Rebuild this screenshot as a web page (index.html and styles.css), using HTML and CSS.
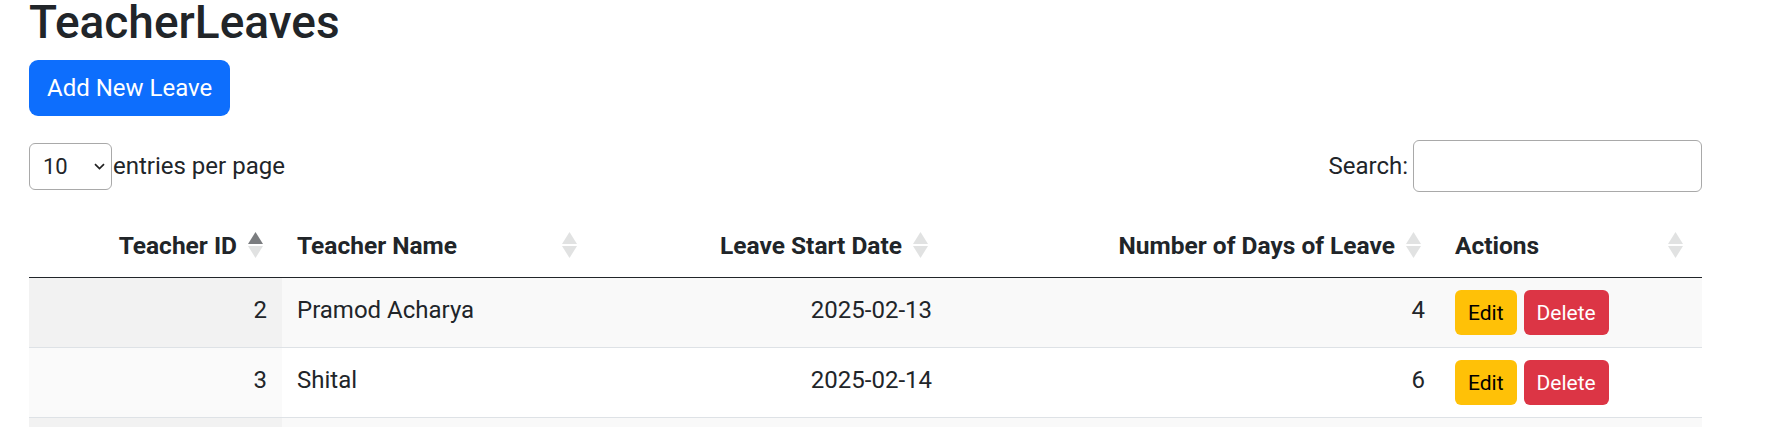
FILE: index.html
```html
<!DOCTYPE html>
<html lang="en">
<head>
<meta charset="utf-8">
<title>TeacherLeaves</title>
<link rel="stylesheet" href="styles.css">
</head>
<body>
<div class="page">
  <h2 class="title">TeacherLeaves</h2>
  <div class="actions-bar">
    <a class="btn btn-add" href="#">Add New Leave</a>
  </div>

  <div class="controls">
    <div class="length">
      <div class="select-wrap">
        <select class="select">
          <option>10</option>
          <option>25</option>
          <option>50</option>
          <option>100</option>
        </select>
        <svg class="chev" width="11" height="7" viewBox="0 0 11 7"><path d="M1 1.2l4.5 4.3L10 1.2" fill="none" stroke="#222" stroke-width="1.7"/></svg>
      </div>
      <label class="length-label">entries per page</label>
    </div>
    <div class="search">
      <label class="search-label">Search:</label>
      <input class="search-input" type="search">
    </div>
  </div>

  <table class="table">
    <colgroup>
      <col class="c1"><col class="c2"><col class="c3"><col class="c4"><col class="c5">
    </colgroup>
    <thead>
      <tr>
        <th class="num">Teacher ID<span class="order"><svg width="15" height="26" viewBox="0 0 15 26"><path class="up active" d="M7.5 0L15 12H0z"/><path class="down" d="M0 14h15L7.5 26z"/></svg></span></th>
        <th>Teacher Name<span class="order"><svg width="15" height="26" viewBox="0 0 15 26"><path class="up" d="M7.5 0L15 12H0z"/><path class="down" d="M0 14h15L7.5 26z"/></svg></span></th>
        <th class="num">Leave Start Date<span class="order"><svg width="15" height="26" viewBox="0 0 15 26"><path class="up" d="M7.5 0L15 12H0z"/><path class="down" d="M0 14h15L7.5 26z"/></svg></span></th>
        <th class="num">Number of Days of Leave<span class="order"><svg width="15" height="26" viewBox="0 0 15 26"><path class="up" d="M7.5 0L15 12H0z"/><path class="down" d="M0 14h15L7.5 26z"/></svg></span></th>
        <th>Actions<span class="order"><svg width="15" height="26" viewBox="0 0 15 26"><path class="up" d="M7.5 0L15 12H0z"/><path class="down" d="M0 14h15L7.5 26z"/></svg></span></th>
      </tr>
    </thead>
    <tbody>
      <tr>
        <td class="num sorted">2</td>
        <td>Pramod Acharya</td>
        <td class="num">2025-02-13</td>
        <td class="num">4</td>
        <td><div class="row-btns"><a class="btn btn-sm btn-edit" href="#">Edit</a><a class="btn btn-sm btn-del" href="#">Delete</a></div></td>
      </tr>
      <tr>
        <td class="num sorted">3</td>
        <td>Shital</td>
        <td class="num">2025-02-14</td>
        <td class="num">6</td>
        <td><div class="row-btns"><a class="btn btn-sm btn-edit" href="#">Edit</a><a class="btn btn-sm btn-del" href="#">Delete</a></div></td>
      </tr>
      <tr class="filler">
        <td class="num sorted"></td>
        <td></td>
        <td class="num"></td>
        <td class="num"></td>
        <td></td>
      </tr>
    </tbody>
  </table>
</div>
</body>
</html>
```

FILE: styles.css
```css
html, body {
  margin: 0;
  padding: 0;
  overflow: hidden;
  background: #fff;
}

body {
  font-family: Roboto, "Liberation Sans", sans-serif;
  font-size: 24px;
  color: #212529;
}

.page {
  padding: 0 63px 0 29px;
}

.title {
  margin: 0 0 16px;
  font-size: 46px;
  font-weight: 500;
  line-height: 44px;
  color: #212529;
}

.actions-bar {
  display: flex;
}

.btn {
  display: inline-flex;
  align-items: center;
  justify-content: center;
  text-decoration: none;
  box-sizing: border-box;
  white-space: nowrap;
}

.btn-add {
  height: 56px;
  padding: 0 18px;
  background: #0d6efd;
  color: #fff;
  border-radius: 9px;
  font-size: 24px;
}

.controls {
  display: flex;
  justify-content: space-between;
  align-items: center;
  margin-top: 24px;
  height: 52px;
}

.length {
  display: flex;
  align-items: center;
  gap: 1px;
}

.select-wrap {
  position: relative;
  display: flex;
}

.select {
  appearance: none;
  -webkit-appearance: none;
  width: 83px;
  height: 47px;
  box-sizing: border-box;
  border: 1px solid #a9a9a9;
  border-radius: 6px;
  background: #fff;
  padding: 0 0 0 13px;
  font-family: Roboto, "Liberation Sans", sans-serif;
  font-size: 22px;
  color: #212529;
  margin: 0;
}

.chev {
  position: absolute;
  right: 7px;
  top: 20px;
  pointer-events: none;
}

.length-label {
  font-size: 24px;
}

.search {
  display: flex;
  align-items: center;
  gap: 5px;
}

.search-input {
  width: 289px;
  height: 52px;
  box-sizing: border-box;
  border: 1px solid #a9a9a9;
  border-radius: 6px;
  margin: 0;
  padding: 0 10px;
  font-size: 21px;
}

.table {
  width: 100%;
  margin-top: 21px;
  border-collapse: collapse;
  table-layout: fixed;
}

.c1 { width: 253px; }
.c2 { width: 314px; }
.c3 { width: 351px; }
.c4 { width: 493px; }
.c5 { width: 262px; }

.table th {
  position: relative;
  padding: 13px 45px 11px 15px;
  line-height: 40px;
  font-size: 24.5px;
  font-weight: 700;
  text-align: left;
  border-bottom: 1px solid #212529;
  white-space: nowrap;
}

.table th.num,
.table td.num {
  text-align: right;
}

.order {
  position: absolute;
  right: 18px;
  top: 0;
  bottom: 0;
  width: 18px;
  display: flex;
  align-items: center;
  justify-content: center;
}

.order path {
  fill: #212529;
  opacity: 0.135;
}

.order path.active {
  opacity: 0.6;
}

.table td {
  padding: 12px 15px;
  line-height: 40px;
  vertical-align: top;
  border-bottom: 1px solid #dee2e6;
}

.table tr.filler td {
  height: 45px;
}

.table tbody tr:nth-child(odd) td {
  background: #f9f9f9;
}

.table tbody tr:nth-child(odd) td.sorted {
  background: #f2f2f2;
}

.table tbody tr:nth-child(even) td.sorted {
  background: #fafafa;
}

.row-btns {
  display: flex;
  gap: 7px;
}

.btn-sm {
  height: 45px;
  padding: 0 13px;
  border-radius: 6px;
  font-size: 21px;
}

.btn-edit {
  background: #ffc107;
  color: #000;
}

.btn-del {
  background: #dc3545;
  color: #fff;
}
```
